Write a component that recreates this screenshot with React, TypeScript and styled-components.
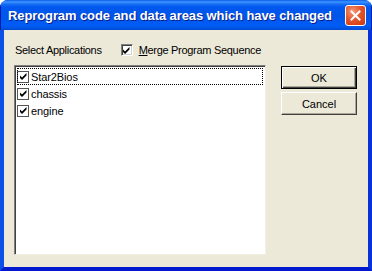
import styled, { createGlobalStyle } from "styled-components";

const GlobalStyle = createGlobalStyle`
  html, body {
    margin: 0;
    padding: 0;
    background: #ffffff;
  }
  body {
    width: 372px;
    height: 271px;
    overflow: hidden;
    font-family: "Liberation Sans", Arial, sans-serif;
  }
`;

const Window = styled.div`
  width: 372px;
  height: 271px;
  box-sizing: border-box;
  display: flex;
  flex-direction: column;
  border-radius: 8px 8px 0 0;
  overflow: hidden;
  background: #0831d9;
`;

const TitleBar = styled.div`
  height: 30px;
  flex: none;
  display: flex;
  align-items: center;
  justify-content: space-between;
  padding: 0 5px 0 7px;
  box-sizing: border-box;
  background: linear-gradient(
    to bottom,
    #0a5ee9 0px,
    #3d95ff 2px,
    #1a6ef6 4px,
    #0058ee 7px,
    #0055ea 18px,
    #005df7 25px,
    #0055e5 28px,
    #0048d0 30px
  );
  border-left: 1px solid #0019a8;
  border-right: 1px solid #0019a8;
`;

const Title = styled.span`
  color: #ffffff;
  font-size: 13px;
  font-weight: bold;
  letter-spacing: -0.1px;
  text-shadow: 1px 1px 0 #0a1e8a;
  white-space: nowrap;
  padding-top: 1px;
`;

const CloseButton = styled.button`
  width: 21px;
  height: 21px;
  padding: 0;
  border: 1px solid #ffffff;
  border-radius: 3px;
  background: radial-gradient(circle at 35% 30%, #f39c7c 0%, #e5552d 45%, #c8390f 100%);
  display: flex;
  align-items: center;
  justify-content: center;
  margin-top: 1px;
`;

const Client = styled.div`
  flex: 1;
  display: flex;
  gap: 15px;
  padding: 13px 10px 0 10px;
  background: #ece9d8;
  border-style: solid;
  border-width: 0 4px 4px 4px;
  border-color: #0831d9 #0831d9 #0019cf #0a4fe6;
`;

const LeftColumn = styled.div`
  width: 252px;
  display: flex;
  flex-direction: column;
  gap: 8px;
`;

const HeaderRow = styled.div`
  height: 14px;
  display: flex;
  align-items: center;
  padding-left: 1px;
`;

const Label = styled.span`
  font-size: 11px;
  letter-spacing: -0.3px;
  color: #000000;
  white-space: nowrap;
`;

const MergeOption = styled.label`
  display: flex;
  align-items: center;
  gap: 6px;
  margin-left: 19px;
`;

const Mnemonic = styled.span`
  text-decoration: underline;
`;

const Box = styled.span<{ $sunken?: boolean }>`
  width: 12px;
  height: 12px;
  flex: none;
  box-sizing: border-box;
  background: #ffffff;
  display: flex;
  align-items: center;
  justify-content: center;
  border: 1px solid;
  border-color: ${(p) => (p.$sunken ? "#808080 #ffffff #ffffff #808080" : "#555555")};
  box-shadow: ${(p) => (p.$sunken ? "inset 1px 1px #404040, inset -1px -1px #d4d0c8" : "none")};
`;

const ListBox = styled.div`
  height: 190px;
  box-sizing: border-box;
  background: #ffffff;
  border: 1px solid;
  border-color: #808080 #f1efe2 #f1efe2 #808080;
  box-shadow: inset 1px 1px #404040, inset -1px -1px #ffffff;
  padding: 2px 2px 2px 2px;
`;

const Row = styled.div<{ $focused?: boolean }>`
  height: 17px;
  box-sizing: border-box;
  display: flex;
  align-items: center;
  gap: 2px;
  outline: ${(p) => (p.$focused ? "1px dotted #000000" : "none")};
  outline-offset: -1px;
  padding-left: 0;
`;

const ItemText = styled.span`
  font-size: 11px;
  color: #000000;
  letter-spacing: -0.1px;
`;

const ButtonColumn = styled.div`
  width: 76px;
  display: flex;
  flex-direction: column;
  gap: 3px;
  padding-top: 23px;
`;

const Button = styled.button<{ $default?: boolean }>`
  width: 76px;
  height: 23px;
  box-sizing: border-box;
  padding: 0;
  background: #ece9d8;
  font-family: "Liberation Sans", Arial, sans-serif;
  font-size: 11px;
  color: #000000;
  border: 1px solid;
  border-color: ${(p) => (p.$default ? "#000000" : "#ffffff #404040 #404040 #ffffff")};
  box-shadow: ${(p) =>
    p.$default
      ? "inset 1px 1px #ffffff, inset -1px -1px #404040, inset -2px -2px #aca899"
      : "inset -1px -1px #aca899"};
`;

const Check = () => (
  <svg width="9" height="9" viewBox="0 0 9 9">
    <path d="M1 3.5 L3 5.5 L7.5 1 L7.5 3.5 L3 8 L1 6 Z" fill="#000000" />
  </svg>
);

const CloseIcon = () => (
  <svg width="11" height="11" viewBox="0 0 11 11">
    <path d="M1.5 1.5 L9.5 9.5 M9.5 1.5 L1.5 9.5" stroke="#ffffff" strokeWidth="2" strokeLinecap="square" />
  </svg>
);

const items = ["Star2Bios", "chassis", "engine"];

export default function App() {
  return (
    <>
      <GlobalStyle />
      <Window>
        <TitleBar>
          <Title>Reprogram code and data areas which have changed</Title>
          <CloseButton aria-label="Close">
            <CloseIcon />
          </CloseButton>
        </TitleBar>
        <Client>
          <LeftColumn>
            <HeaderRow>
              <Label>Select Applications</Label>
              <MergeOption>
                <Box $sunken>
                  <Check />
                </Box>
                <Label>
                  <Mnemonic>M</Mnemonic>erge Program Sequence
                </Label>
              </MergeOption>
            </HeaderRow>
            <ListBox>
              {items.map((item, i) => (
                <Row key={item} $focused={i === 0}>
                  <Box>
                    <Check />
                  </Box>
                  <ItemText>{item}</ItemText>
                </Row>
              ))}
            </ListBox>
          </LeftColumn>
          <ButtonColumn>
            <Button $default>OK</Button>
            <Button>Cancel</Button>
          </ButtonColumn>
        </Client>
      </Window>
    </>
  );
}
